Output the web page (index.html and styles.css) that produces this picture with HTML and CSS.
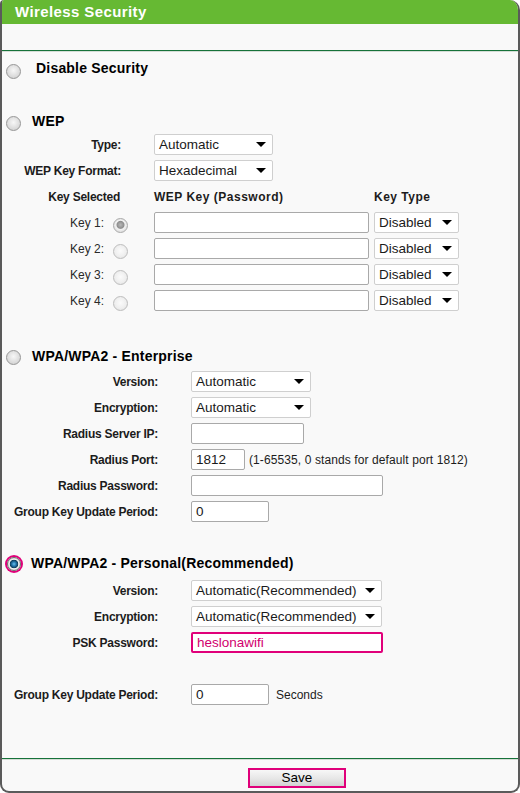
FILE: index.html
```html
<!DOCTYPE html>
<html>
<head>
<meta charset="utf-8">
<title>Wireless Security</title>
<link rel="stylesheet" href="styles.css">
</head>
<body>
<div class="frame">
  <div class="header"><h1 class="title">Wireless Security</h1></div>
  <div class="subbar"></div>
  <div class="rule"></div>

  <div class="body">
    <div class="option opt-disable"><span class="radio"></span><span class="opt-label">Disable Security</span></div>

    <div class="option opt-wep"><span class="radio"></span><span class="opt-label">WEP</span></div>
    <div class="grid wep-grid">
      <div class="lbl">Type:</div>
      <div class="field span2"><div class="select w119"><span>Automatic</span><i class="caret"></i></div></div>

      <div class="lbl">WEP Key Format:</div>
      <div class="field span2"><div class="select w119"><span>Hexadecimal</span><i class="caret"></i></div></div>

      <div class="lbl lbl-head">Key Selected</div>
      <div class="colhead">WEP Key (Password)</div>
      <div class="colhead">Key Type</div>

      <div class="keylbl"><span>Key 1:</span><span class="kradio on"></span></div>
      <div class="field"><div class="input w215"></div></div>
      <div class="field"><div class="select w85"><span>Disabled</span><i class="caret"></i></div></div>

      <div class="keylbl"><span>Key 2:</span><span class="kradio"></span></div>
      <div class="field"><div class="input w215"></div></div>
      <div class="field"><div class="select w85"><span>Disabled</span><i class="caret"></i></div></div>

      <div class="keylbl"><span>Key 3:</span><span class="kradio"></span></div>
      <div class="field"><div class="input w215"></div></div>
      <div class="field"><div class="select w85"><span>Disabled</span><i class="caret"></i></div></div>

      <div class="keylbl"><span>Key 4:</span><span class="kradio"></span></div>
      <div class="field"><div class="input w215"></div></div>
      <div class="field"><div class="select w85"><span>Disabled</span><i class="caret"></i></div></div>
    </div>

    <div class="option opt-ent"><span class="radio"></span><span class="opt-label">WPA/WPA2 - Enterprise</span></div>
    <div class="grid wpa-grid ent-grid">
      <div class="lbl">Version:</div>
      <div class="field"><div class="select w120"><span>Automatic</span><i class="caret"></i></div></div>

      <div class="lbl">Encryption:</div>
      <div class="field"><div class="select w120"><span>Automatic</span><i class="caret"></i></div></div>

      <div class="lbl">Radius Server IP:</div>
      <div class="field"><div class="input w113"></div></div>

      <div class="lbl">Radius Port:</div>
      <div class="field"><div class="input w54">1812</div><span class="note">(1-65535, 0 stands for default port 1812)</span></div>

      <div class="lbl">Radius Password:</div>
      <div class="field"><div class="input w192"></div></div>

      <div class="lbl">Group Key Update Period:</div>
      <div class="field"><div class="input w78">0</div></div>
    </div>

    <div class="option opt-per"><span class="radio on"></span><span class="opt-label">WPA/WPA2 - Personal(Recommended)</span></div>
    <div class="grid wpa-grid per-grid">
      <div class="lbl">Version:</div>
      <div class="field"><div class="select w191"><span>Automatic(Recommended)</span><i class="caret"></i></div></div>

      <div class="lbl">Encryption:</div>
      <div class="field"><div class="select w191"><span>Automatic(Recommended)</span><i class="caret"></i></div></div>

      <div class="lbl">PSK Password:</div>
      <div class="field"><div class="input w192 focus">heslonawifi</div></div>

      <div class="lbl"></div>
      <div class="field"></div>

      <div class="lbl">Group Key Update Period:</div>
      <div class="field"><div class="input w78">0</div><span class="note seconds">Seconds</span></div>
    </div>
  </div>

  <div class="footer">
    <div class="rule"></div>
    <div class="actions"><button class="btn" type="button">Save</button></div>
  </div>
</div>
</body>
</html>
```
FILE: styles.css
```css
html, body {
  margin: 0;
  padding: 0;
  background: #ffffff;
}

body {
  font-family: "Liberation Sans", Arial, sans-serif;
  color: #1c1c1c;
}

.frame {
  width: 520px;
  height: 793px;
  box-sizing: border-box;
  border-left: 2px solid #5a5a5a;
  border-right: 2px solid #5a5a5a;
  border-bottom: 2px solid #5a5a5a;
  border-radius: 4px 10px 9px 9px;
  background: #f9f9f9;
  overflow: hidden;
  display: flex;
  flex-direction: column;
}

.header {
  height: 24px;
  background: #66b933;
  flex: none;
}

.title {
  margin: 0;
  padding-left: 13px;
  font-size: 15px;
  line-height: 24px;
  font-weight: bold;
  letter-spacing: 0.4px;
  color: #ffffff;
}

.subbar {
  height: 26px;
  flex: none;
}

.rule {
  height: 0;
  border-top: 1px solid #17723a;
  border-bottom: 1px solid #d5ddd6;
  flex: none;
}

.body {
  padding-top: 8px;
  flex: none;
}

/* section options */
.option {
  display: flex;
  align-items: flex-start;
  height: 16px;
  padding-left: 4px;
}

.opt-label {
  font-size: 14px;
  line-height: 16px;
  font-weight: bold;
  letter-spacing: 0.2px;
  color: #000;
  margin-left: 11px;
}

.opt-disable .opt-label { margin-left: 15px; }
.opt-disable .radio { margin-top: 4px; }
.opt-wep { margin-top: 37px; }
.opt-ent { margin-top: 37px; }
.opt-ent .radio { margin-top: 2px; }
.opt-per { margin-top: 33px; }
.opt-per .radio { margin-top: 2px; }

.radio {
  flex: none;
  width: 15px;
  height: 15px;
  box-sizing: border-box;
  margin-top: 3px;
  border-radius: 50%;
  border: 1px solid #979797;
  background: radial-gradient(circle at 50% 42%, #f7f7f7 0, #e3e3e3 45%, #c9c9c9 100%);
}

.radio.on {
  width: 14px;
  height: 14px;
  margin-left: 1px;
  border: 1px solid #6b6b6b;
  background: radial-gradient(circle at 50% 50%, #6cc0ec 0, #2479b0 2px, #0c3b59 4px, #f4f4f4 4.6px, #dcdcdc 6px);
  box-shadow: 0 0 0 2px #e0007a;
}

.opt-per .opt-label { margin-left: 10px; }

/* grids */
.grid {
  display: grid;
  grid-auto-rows: 21px;
  row-gap: 5px;
  align-items: center;
  font-size: 12px;
}

.wep-grid {
  margin-top: 5px;
  grid-template-columns: 152px 220px 85px;
}

.wpa-grid {
  grid-template-columns: 189px 1fr;
}

.ent-grid { margin-top: 7px; }
.per-grid { margin-top: 9px; }

.lbl {
  text-align: right;
  padding-right: 33px;
  font-weight: bold;
  letter-spacing: -0.25px;
  white-space: nowrap;
}

.lbl-head { padding-right: 34px; }

.colhead {
  font-weight: bold;
  font-size: 12px;
  letter-spacing: 0.5px;
}

.span2 { grid-column: span 2; }

.field {
  display: flex;
  align-items: center;
  height: 21px;
}

.keylbl {
  display: flex;
  align-items: center;
  justify-content: flex-end;
  padding-right: 26px;
  color: #2a2a2a;
  height: 21px;
}

.kradio {
  width: 15px;
  height: 15px;
  box-sizing: border-box;
  margin-left: 9px;
  margin-top: 5px;
  border-radius: 50%;
  border: 1px solid #bdbdbd;
  background: radial-gradient(circle at 50% 45%, #fbfbfb 0, #efefef 55%, #dddddd 100%);
}

.kradio.on {
  border-color: #a9a9a9;
  background: radial-gradient(circle at 50% 45%, #b9b9b9 0, #8e8e8e 3.5px, #f3f3f3 4.5px, #e3e3e3 6.5px);
}

/* controls */
.select {
  display: flex;
  align-items: center;
  justify-content: space-between;
  box-sizing: border-box;
  height: 21px;
  padding: 0 6px 0 4px;
  border: 1px solid #cfcfcf;
  border-radius: 2px;
  background: #ffffff;
  font-size: 13.5px;
  color: #1a1a1a;
  white-space: nowrap;
}

.caret {
  flex: none;
  width: 0;
  height: 0;
  border-left: 5px solid transparent;
  border-right: 5px solid transparent;
  border-top: 5px solid #000;
}

.input {
  box-sizing: border-box;
  height: 21px;
  padding: 0 4px;
  border: 1px solid #a9a9a9;
  border-radius: 2px;
  background: #ffffff;
  font-size: 13.5px;
  line-height: 19px;
  color: #1a1a1a;
}

.input.focus {
  border: 2px solid #e0007a;
  line-height: 17px;
  color: #d1006e;
}

.w54 { width: 54px; }
.w78 { width: 78px; }
.w85 { width: 85px; }
.w113 { width: 113px; }
.w119 { width: 119px; }
.w120 { width: 120px; }
.w191 { width: 191px; }
.w192 { width: 192px; }
.w215 { width: 215px; }

.note {
  margin-left: 4px;
  font-size: 12px;
  letter-spacing: 0.1px;
  color: #1c1c1c;
  white-space: nowrap;
}

.note.seconds { margin-left: 7px; letter-spacing: 0; }

/* footer */
.footer {
  margin-top: auto;
  height: 33px;
  flex: none;
}

.actions {
  padding: 8px 0 0 246px;
}

.btn {
  display: block;
  width: 98px;
  height: 20px;
  box-sizing: border-box;
  padding: 0;
  border: 2px solid #e0007a;
  background: linear-gradient(#f7f7f7, #e6e6e6 55%, #d2d2d2);
  font-family: "Liberation Sans", Arial, sans-serif;
  font-size: 13.5px;
  line-height: 16px;
  color: #000;
}
```
